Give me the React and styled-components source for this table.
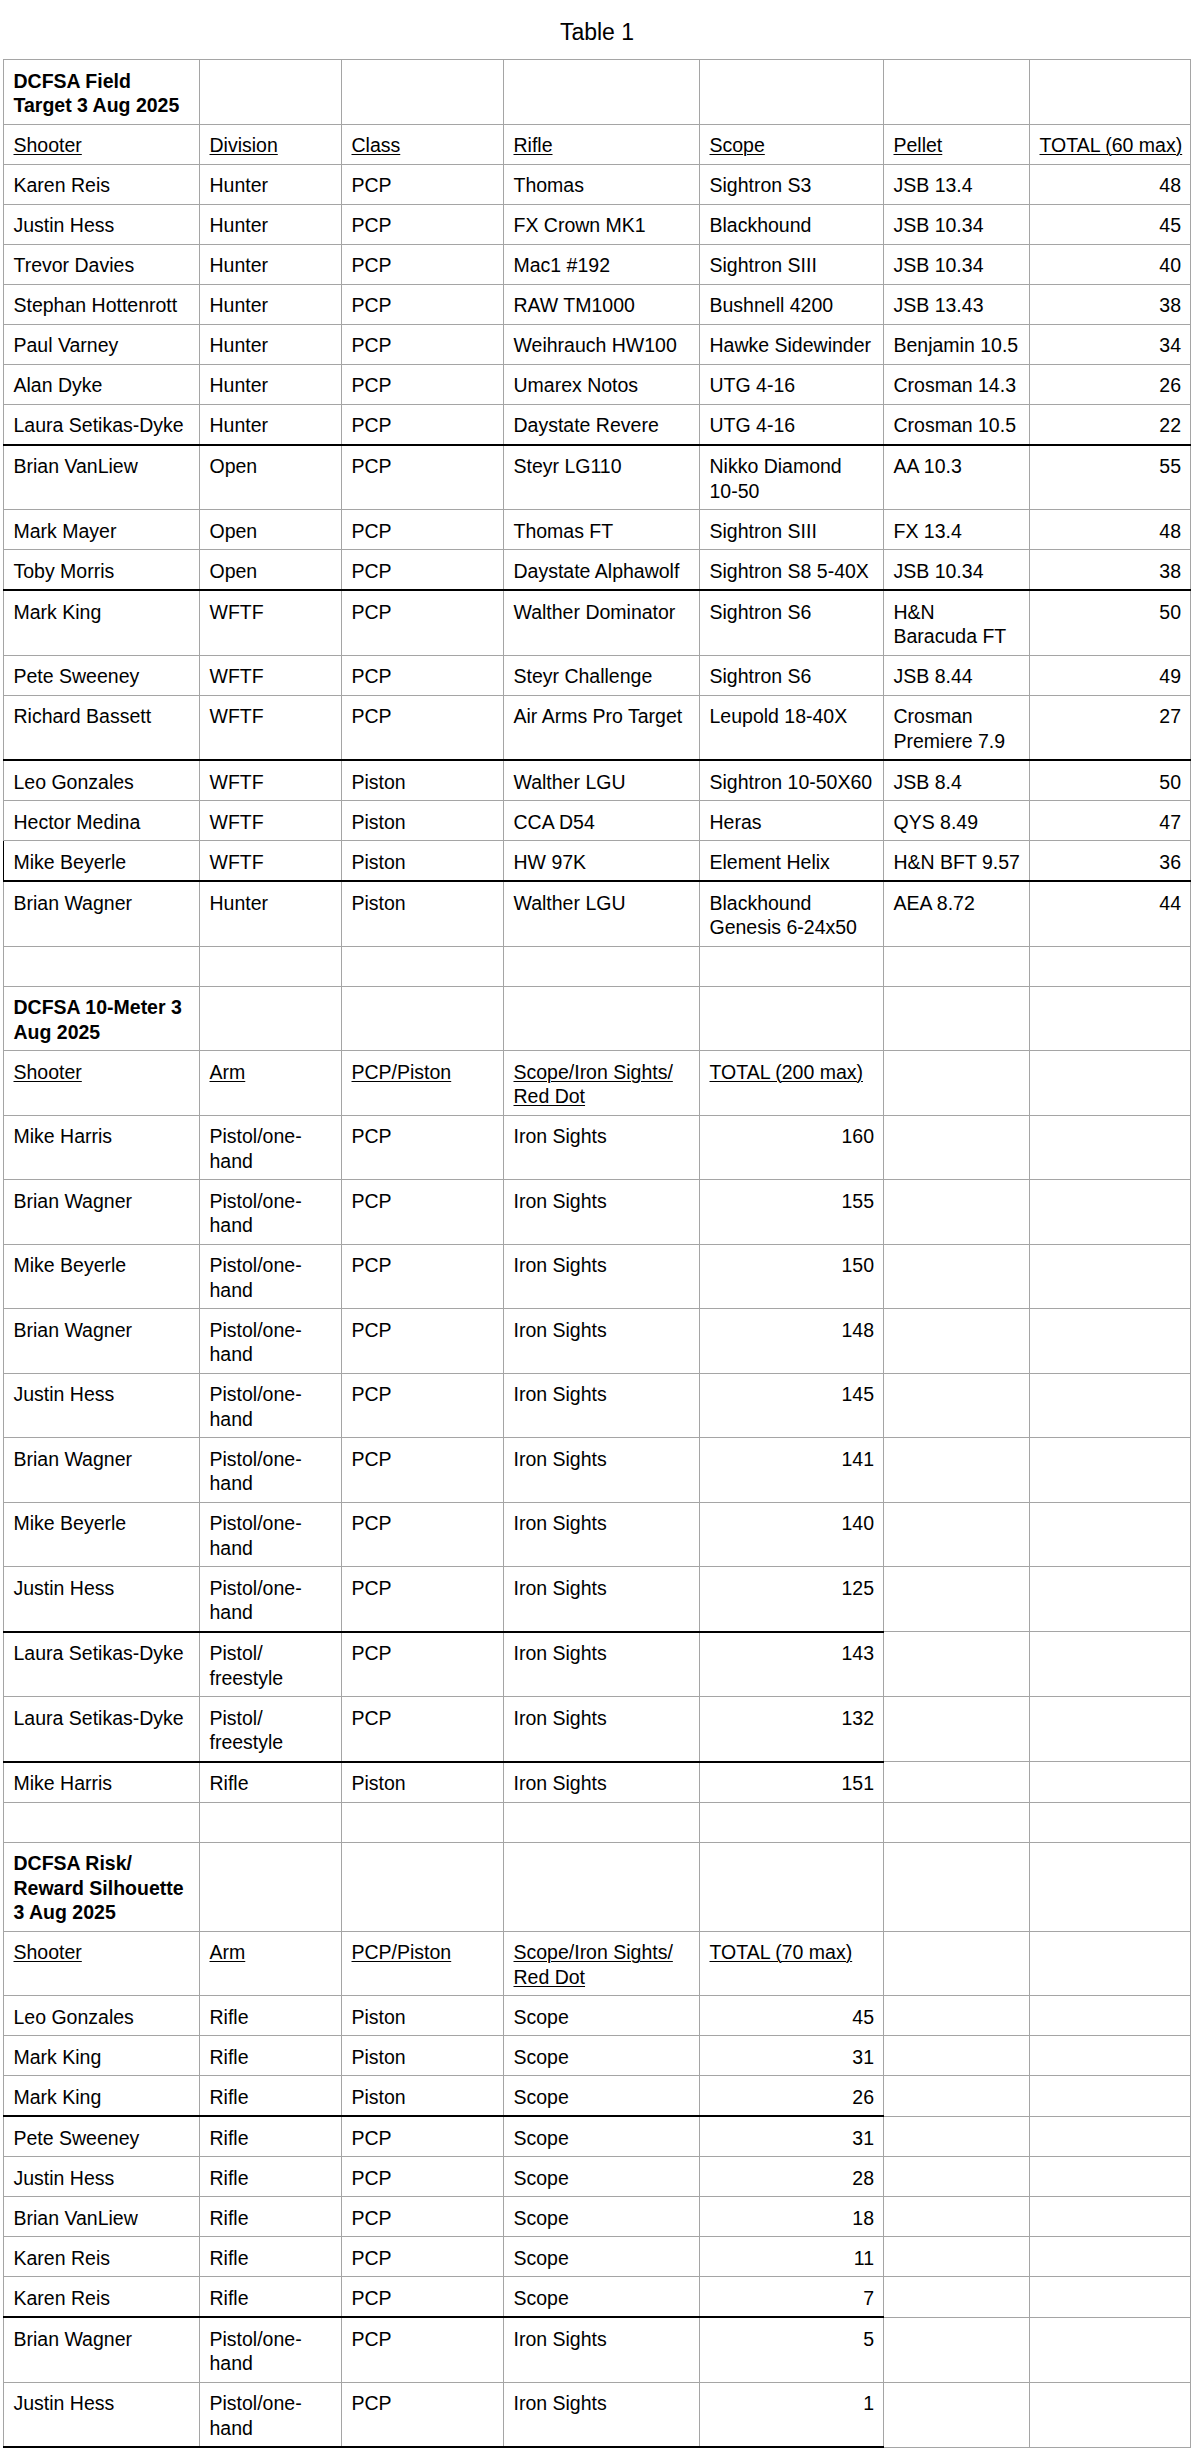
import React from "react";
import styled, { createGlobalStyle } from "styled-components";

const GlobalStyle = createGlobalStyle`
  html, body { margin: 0; padding: 0; background: #fff; }
  body {
    font-family: "Liberation Sans", Arial, Helvetica, sans-serif;
    color: #000;
  }
`;

const Page = styled.div`
  width: 1194px;
  display: flex;
  flex-direction: column;
  align-items: center;
`;

const Title = styled.div`
  font-size: 23px;
  line-height: 27px;
  padding-top: 19px;
  margin-bottom: 13px;
  text-align: center;
`;

const Sheet = styled.table`
  width: 1187px;
  table-layout: fixed;
  border-collapse: collapse;
  border: 1px solid #a5a5a5;
  font-size: 19.5px;
`;

const Row = styled.tr``;

const Cell = styled.td`
  padding: 8.5px 9px 6px 9.5px;
  line-height: 24.5px;
  vertical-align: top;
  border: 1px solid #a5a5a5;
  white-space: pre;
  overflow: hidden;
  text-align: ${(p) => (p.$right ? "right" : "left")};
  font-weight: ${(p) => (p.$bold ? 700 : 400)};
  text-decoration: ${(p) => (p.$underline ? "underline" : "none")};
  text-decoration-thickness: 1px;
  text-underline-offset: 2px;
  ${(p) => p.$sep && "border-bottom: 2px solid #000;"}
  ${(p) => p.$darkLeft && "border-left-color: #000;"}
`;

const widths = [196, 142, 162, 196, 184, 146, 161];

const field = {
  right: 6,
  sepCols: 7,
  rows: [
    { kind: "title", cells: ["DCFSA Field\nTarget 3 Aug 2025"] },
    { kind: "header", cells: ["Shooter", "Division", "Class", "Rifle", "Scope", "Pellet", "TOTAL (60 max)"] },
    { cells: ["Karen Reis", "Hunter", "PCP", "Thomas", "Sightron S3", "JSB 13.4", "48"] },
    { cells: ["Justin Hess", "Hunter", "PCP", "FX Crown MK1", "Blackhound", "JSB 10.34", "45"] },
    { cells: ["Trevor Davies", "Hunter", "PCP", "Mac1 #192", "Sightron SIII", "JSB 10.34", "40"] },
    { cells: ["Stephan Hottenrott", "Hunter", "PCP", "RAW TM1000", "Bushnell 4200", "JSB 13.43", "38"] },
    { cells: ["Paul Varney", "Hunter", "PCP", "Weihrauch HW100", "Hawke Sidewinder", "Benjamin 10.5", "34"] },
    { cells: ["Alan Dyke", "Hunter", "PCP", "Umarex Notos", "UTG 4-16", "Crosman 14.3", "26"] },
    { sep: true, cells: ["Laura Setikas-Dyke", "Hunter", "PCP", "Daystate Revere", "UTG 4-16", "Crosman 10.5", "22"] },
    { cells: ["Brian VanLiew", "Open", "PCP", "Steyr LG110", "Nikko Diamond\n10-50", "AA 10.3", "55"] },
    { cells: ["Mark Mayer", "Open", "PCP", "Thomas FT", "Sightron SIII", "FX 13.4", "48"] },
    { sep: true, cells: ["Toby Morris", "Open", "PCP", "Daystate Alphawolf", "Sightron S8 5-40X", "JSB 10.34", "38"] },
    { cells: ["Mark King", "WFTF", "PCP", "Walther Dominator", "Sightron S6", "H&N\nBaracuda FT", "50"] },
    { cells: ["Pete Sweeney", "WFTF", "PCP", "Steyr Challenge", "Sightron S6", "JSB 8.44", "49"] },
    { sep: true, cells: ["Richard Bassett", "WFTF", "PCP", "Air Arms Pro Target", "Leupold 18-40X", "Crosman\nPremiere 7.9", "27"] },
    { cells: ["Leo Gonzales", "WFTF", "Piston", "Walther LGU", "Sightron 10-50X60", "JSB 8.4", "50"] },
    { cells: ["Hector Medina", "WFTF", "Piston", "CCA D54", "Heras", "QYS 8.49", "47"] },
    { sep: true, darkLeft: true, cells: ["Mike Beyerle", "WFTF", "Piston", "HW 97K", "Element Helix", "H&N BFT 9.57", "36"] },
    { cells: ["Brian Wagner", "Hunter", "Piston", "Walther LGU", "Blackhound\nGenesis 6-24x50", "AEA 8.72", "44"] },
    { cells: [] },
  ],
};

const pistol = (name, total, sep) => ({
  sep,
  cells: [name, "Pistol/one-\nhand", "PCP", "Iron Sights", String(total)],
});

const tenMeter = {
  right: 4,
  sepCols: 5,
  rows: [
    { kind: "title", cells: ["DCFSA 10-Meter 3\nAug 2025"] },
    { kind: "header", cells: ["Shooter", "Arm", "PCP/Piston", "Scope/Iron Sights/\nRed Dot", "TOTAL (200 max)"] },
    pistol("Mike Harris", 160),
    pistol("Brian Wagner", 155),
    pistol("Mike Beyerle", 150),
    pistol("Brian Wagner", 148),
    pistol("Justin Hess", 145),
    pistol("Brian Wagner", 141),
    pistol("Mike Beyerle", 140),
    pistol("Justin Hess", 125, true),
    { cells: ["Laura Setikas-Dyke", "Pistol/\nfreestyle", "PCP", "Iron Sights", "143"] },
    { sep: true, cells: ["Laura Setikas-Dyke", "Pistol/\nfreestyle", "PCP", "Iron Sights", "132"] },
    { cells: ["Mike Harris", "Rifle", "Piston", "Iron Sights", "151"] },
    { cells: [] },
  ],
};

const rifle = (name, power, total, sep) => ({
  sep,
  cells: [name, "Rifle", power, "Scope", String(total)],
});

const riskReward = {
  right: 4,
  sepCols: 5,
  rows: [
    { kind: "title", cells: ["DCFSA Risk/\nReward Silhouette\n3 Aug 2025"] },
    { kind: "header", cells: ["Shooter", "Arm", "PCP/Piston", "Scope/Iron Sights/\nRed Dot", "TOTAL (70 max)"] },
    rifle("Leo Gonzales", "Piston", 45),
    rifle("Mark King", "Piston", 31),
    rifle("Mark King", "Piston", 26, true),
    rifle("Pete Sweeney", "PCP", 31),
    rifle("Justin Hess", "PCP", 28),
    rifle("Brian VanLiew", "PCP", 18),
    rifle("Karen Reis", "PCP", 11),
    rifle("Karen Reis", "PCP", 7, true),
    pistol("Brian Wagner", 5),
    pistol("Justin Hess", 1, true),
  ],
};

const sections = [field, tenMeter, riskReward];

function SectionRows({ section, sIndex }) {
  return section.rows.map((row, rIndex) => (
    <Row key={`${sIndex}-${rIndex}`}>
      {widths.map((_, c) => {
        const text = row.cells[c];
        const isHeader = row.kind === "header";
        const isTitle = row.kind === "title";
        return (
          <Cell
            key={c}
            $bold={isTitle}
            $underline={isHeader && !!text}
            $right={!isHeader && !isTitle && c === section.right}
            $sep={row.sep && c < section.sepCols}
            $darkLeft={row.darkLeft && c === 0}
          >
            {text ? text : "\u00a0"}
          </Cell>
        );
      })}
    </Row>
  ));
}

export default function App() {
  return (
    <>
      <GlobalStyle />
      <Page>
        <Title>Table 1</Title>
        <Sheet>
          <colgroup>
            {widths.map((w, i) => (
              <col key={i} style={{ width: `${w}px` }} />
            ))}
          </colgroup>
          <tbody>
            {sections.map((s, i) => (
              <SectionRows key={i} section={s} sIndex={i} />
            ))}
          </tbody>
        </Sheet>
      </Page>
    </>
  );
}
